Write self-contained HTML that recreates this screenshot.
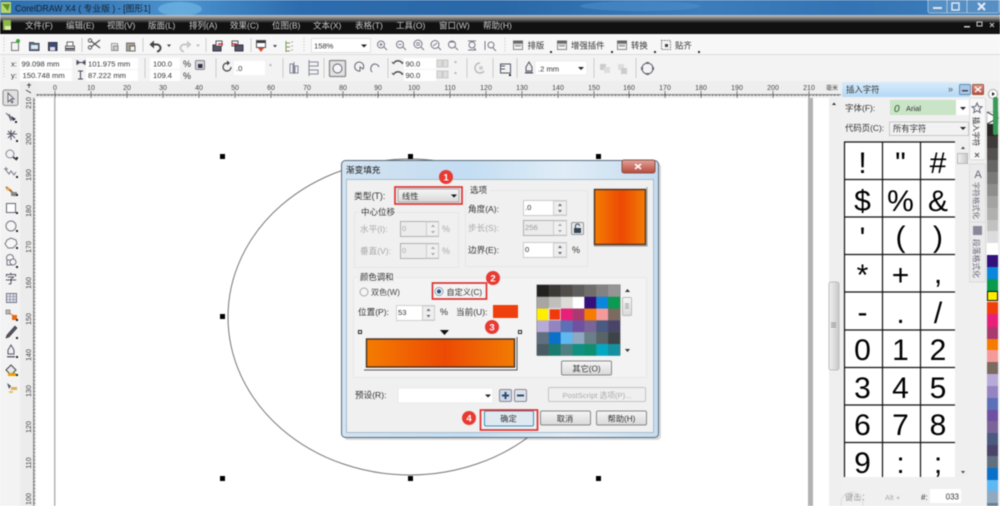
<!DOCTYPE html>
<html><head><meta charset="utf-8"><title>CorelDRAW X4</title>
<style>
html,body{margin:0;padding:0;background:#fff;width:1000px;height:506px;overflow:hidden}
svg{display:block;filter:blur(.4px)}
text{font-family:"Liberation Sans","Noto Sans CJK SC",sans-serif;fill:#333;font-size:8.6px}
.m text{fill:#ccc;font-size:8.5px}
.g text{fill:#a8a8a8}
.r text{font-size:7px;fill:#444}
.p text{font-size:7.6px;fill:#333}
.c text{font-size:30px;fill:#000;text-anchor:middle}
</style></head><body>
<svg width="1000" height="506" viewBox="0 0 1000 506" xmlns="http://www.w3.org/2000/svg">
<defs>
<linearGradient id="tb" x1="0" x2="1" y1="0" y2="0"><stop offset="0" stop-color="#2f6faf"/><stop offset=".1" stop-color="#3a7cba"/><stop offset=".18" stop-color="#4a93cf"/><stop offset=".3" stop-color="#2d6cae"/><stop offset=".5" stop-color="#2a68a8"/><stop offset=".7" stop-color="#3d7dbb"/><stop offset=".85" stop-color="#3574b4"/><stop offset="1" stop-color="#3d7fbc"/></linearGradient>
<linearGradient id="mt" x1="0" x2="0" y1="0" y2="1"><stop offset="0" stop-color="#c8c8c8"/><stop offset=".45" stop-color="#777"/><stop offset="1" stop-color="#111"/></linearGradient>
<linearGradient id="fill" x1="0" x2="1" y1="0" y2="0"><stop offset="0" stop-color="#f47c02"/><stop offset=".53" stop-color="#ec4a04"/><stop offset="1" stop-color="#f27c04"/></linearGradient>
<linearGradient id="dl" x1="0" x2="1" y1="0" y2="0"><stop offset="0" stop-color="#d3e3f1"/><stop offset=".4" stop-color="#c3ddf2"/><stop offset=".7" stop-color="#e0edf7"/><stop offset="1" stop-color="#c6dcef"/></linearGradient>
<linearGradient id="btn" x1="0" x2="0" y1="0" y2="1"><stop offset="0" stop-color="#f6f6f6"/><stop offset="1" stop-color="#d9d9d9"/></linearGradient>
<linearGradient id="pt" x1="0" x2="0" y1="0" y2="1"><stop offset="0" stop-color="#d8ecfb"/><stop offset="1" stop-color="#b4d8f4"/></linearGradient>
<linearGradient id="cl" x1="0" x2="0" y1="0" y2="1"><stop offset="0" stop-color="#dfa49a"/><stop offset="1" stop-color="#b84a3c"/></linearGradient>
<linearGradient id="th" x1="0" x2="1" y1="0" y2="0"><stop offset="0" stop-color="#f2f2f2"/><stop offset="1" stop-color="#c8c8c8"/></linearGradient>
<pattern id="hr" width="3.59" height="6" patternUnits="userSpaceOnUse" x="55" y="92"><rect x="0" y="2" width="1" height="2" fill="#444"/><rect x="1.8" y="2" width="1" height="1.5" fill="#555"/></pattern>
<pattern id="vr" width="6" height="3.6" patternUnits="userSpaceOnUse" x="32" y="103"><rect x="1" y="0" width="2" height="1" fill="#444"/><rect x="1" y="1.8" width="1.5" height="1" fill="#555"/></pattern>
</defs>

<!-- backgrounds -->
<rect width="1000" height="506" fill="#f0f0f0"/>
<rect width="1000" height="15" fill="url(#tb)"/>
<ellipse cx="180" cy="9" rx="22" ry="7" fill="#7cc0ea" opacity=".55"/>
<ellipse cx="640" cy="6" rx="60" ry="5" fill="#4f91cb" opacity=".5"/>
<rect y="15" width="1000" height="8" fill="url(#mt)"/>
<rect y="23" width="1000" height="11" fill="#111"/>
<rect y="34" width="1000" height="20" fill="#f7f7f7"/>
<rect y="54" width="1000" height="1" fill="#ddd"/>
<rect y="55" width="1000" height="26" fill="#f3f3f3"/>
<rect y="81" width="841" height="17" fill="#eee"/>
<rect x="0" y="81" width="20" height="425" fill="#f3f3f3"/>
<rect x="20" y="81" width="16" height="425" fill="#ececec"/>
<rect x="36" y="98" width="793" height="408" fill="#fff"/>

<!-- title -->
<rect x="1" y="2" width="10" height="11" fill="#b7d76a"/><path d="M2 4l6 7 2-7z" fill="#5d8f2a"/>
<text x="15" y="11.500" style="font-size:8.800px;fill:#16222e">CorelDRAW X4 ( 专业版 ) - [图形1]</text>
<rect x="928" y="-2" width="71" height="15" rx="2" fill="#5c93c6" stroke="#a9c8e2" opacity=".85"/>
<line x1="947" y1="0" x2="947" y2="13" stroke="#a9c8e2"/><line x1="967" y1="0" x2="967" y2="13" stroke="#a9c8e2"/>
<rect x="933" y="7" width="9" height="2" fill="#dfe9f2"/>
<rect x="952" y="3" width="7" height="7" fill="none" stroke="#e6edf4" stroke-width="1.400"/>
<path d="M978 3l7 7M985 3l-7 7" stroke="#e6edf4" stroke-width="2"/>

<!-- menu -->
<rect x="3" y="20" width="8" height="10" fill="#8cb84a"/><rect x="5" y="26" width="6" height="4" fill="#dfe9b0"/>
<g class="m">
<text x="25" y="28.500">文件(F)</text><text x="66" y="28.500">编辑(E)</text><text x="107" y="28.500">视图(V)</text><text x="148" y="28.500">版面(L)</text><text x="189" y="28.500">排列(A)</text><text x="230" y="28.500">效果(C)</text><text x="272" y="28.500">位图(B)</text><text x="313" y="28.500">文本(X)</text><text x="355" y="28.500">表格(T)</text><text x="396" y="28.500">工具(O)</text><text x="439" y="28.500">窗口(W)</text><text x="483" y="28.500">帮助(H)</text>
</g>
<rect x="964" y="26" width="6" height="1.500" fill="#ccc"/><rect x="977" y="22" width="5" height="4" fill="none" stroke="#ccc"/><path d="M990 23l4 4M994 23l-4 4" stroke="#ccc"/>

<!-- standard toolbar -->
<g>
<line x1="4" y1="38" x2="4" y2="52" stroke="#bbb" stroke-dasharray="1 2"/>
<path d="M11.500 42.500h7v8h-7z" fill="#f4f4f4" stroke="#777"/><circle cx="18" cy="41" r="2" fill="#3aa83a"/>
<path d="M29.500 42.500h4l1 1h4.500v7h-9.500z" fill="#5c7690" stroke="#445"/><rect x="31" y="45" width="7" height="4" fill="#dfe6ee"/>
<rect x="48.500" y="42.500" width="8.500" height="8" fill="#3e4c74" stroke="#334"/><rect x="50" y="47" width="5" height="3.500" fill="#dde"/>
<path d="M65.500 46h9v4.500h-9z" fill="#ddd" stroke="#666"/><rect x="67" y="42" width="6" height="4" fill="#fff" stroke="#666"/><rect x="66" y="48" width="8" height="1.500" fill="#445"/>
<line x1="82" y1="38" x2="82" y2="52" stroke="#ccc"/>
<path d="M91 41l9 7M91 47l9-7" stroke="#555" stroke-width="1.200" fill="none"/><circle cx="90" cy="40.500" r="1.700" fill="none" stroke="#555"/><circle cx="90" cy="47.500" r="1.700" fill="none" stroke="#555"/>
<rect x="111.500" y="43.500" width="6" height="7" fill="#eee" stroke="#999"/><rect x="113.500" y="46" width="4.500" height="4.500" fill="#ccc" stroke="#888"/>
<rect x="126.500" y="43" width="8" height="8" fill="#a89f8c" stroke="#777"/><rect x="130" y="46" width="5" height="5" fill="#eee" stroke="#666"/>
<line x1="143" y1="38" x2="143" y2="52" stroke="#ccc"/>
<path d="M151 44.500h6a3.500 3.500 0 0 1 0 7" fill="none" stroke="#444" stroke-width="2"/><path d="M154 40.500l-4.500 4 4.500 4z" fill="#444"/>
<path d="M167 44.500l4 0-2 2.500z" fill="#444"/>
<path d="M190 44.500h-6a3.500 3.500 0 0 0 0 7" fill="none" stroke="#c8c8c8" stroke-width="2"/><path d="M187 40.500l4.500 4-4.500 4z" fill="#c8c8c8"/>
<path d="M196 44.500l4 0-2 2.500z" fill="#bbb"/>
<line x1="206" y1="38" x2="206" y2="52" stroke="#ccc"/>
<rect x="213" y="45" width="8" height="6" fill="#556" stroke="#334"/><rect x="216" y="41" width="6" height="5" fill="#fff" stroke="#555"/><path d="M218 44h5" stroke="#c33" stroke-width="1.500"/>
<rect x="232" y="41" width="6" height="5" fill="#fff" stroke="#555"/><rect x="235" y="45" width="8" height="6" fill="#556" stroke="#334"/><path d="M232 44h5" stroke="#c33" stroke-width="1.500"/>
<line x1="251" y1="38" x2="251" y2="52" stroke="#ccc"/>
<rect x="256.500" y="40.500" width="9" height="7" fill="#fff" stroke="#555"/><rect x="257" y="41" width="8" height="2" fill="#334"/><path d="M258 48h6l-3 4z" fill="#d84c2c"/>
<path d="M273 45l4 0-2 2.500z" fill="#444"/>
<path d="M286 41v11M286 43h4M286 47h4M286 51h4" stroke="#7a9a5a" fill="none"/><path d="M291 42h2M291 46h2M291 50h2" stroke="#aaa"/>
<line x1="304" y1="38" x2="304" y2="52" stroke="#bbb" stroke-dasharray="1 2"/>
<rect x="311.500" y="38.500" width="59" height="14" fill="#fff" stroke="#e2e2e2"/>
<text x="314" y="48.500" style="font-size:7.600px">158%</text><path d="M361 44.500h6l-3 3z" fill="#222"/>
</g>
<!-- zoom icons -->
<g fill="none" stroke="#778" stroke-width="1">
<circle cx="381" cy="44.500" r="3.500"/><path d="M384 47l3 3M379.500 44.500h3M381 43v3"/>
<circle cx="400" cy="44.500" r="3.500"/><path d="M403 47l3 3M398.500 44.500h3"/>
<circle cx="418" cy="44" r="4"/><path d="M421 47l3 3M416 43h4M416 45h4"/>
<circle cx="435" cy="44.500" r="4"/><path d="M438 47l3 3M433 46l4-3"/>
<circle cx="452" cy="44.500" r="3.500"/><path d="M455 47l3 3M450 42h4"/>
<path d="M468 41h8M468 50h8"/><circle cx="472" cy="45" r="3"/><path d="M474 48l2 2"/>
<path d="M485 41v9"/><circle cx="491" cy="45" r="3"/><path d="M493 48l3 3"/>
</g>
<g>
<line x1="505" y1="38" x2="505" y2="52" stroke="#bbb" stroke-dasharray="1 2"/>
<rect x="513" y="40.500" width="10" height="3" fill="#666"/><rect x="513.500" y="43.500" width="9" height="6" fill="#f4f4f4" stroke="#888"/><rect x="515" y="45" width="6" height="1.500" fill="#999"/>
<text x="527.500" y="48.500" style="font-size:8.400px">排版</text><rect x="550" y="51" width="2" height="2" fill="#333"/>
<rect x="557" y="40.500" width="10" height="3" fill="#666"/><rect x="557.500" y="43.500" width="9" height="6" fill="#f4f4f4" stroke="#888"/><rect x="559" y="45" width="6" height="1.500" fill="#999"/>
<text x="571" y="48.500" style="font-size:8.400px">增强插件</text><rect x="611" y="51" width="2" height="2" fill="#333"/>
<rect x="617" y="40.500" width="10" height="3" fill="#666"/><rect x="617.500" y="43.500" width="9" height="6" fill="#f4f4f4" stroke="#888"/><rect x="619" y="45" width="6" height="1.500" fill="#999"/>
<text x="631" y="48.500" style="font-size:8.400px">转换</text><rect x="654" y="51" width="2" height="2" fill="#333"/>
<rect x="661.500" y="40.500" width="9" height="9" fill="#f6f6f6" stroke="#777" stroke-dasharray="1.500 1"/><rect x="665" y="44" width="3" height="3" fill="#444"/>
<text x="675" y="48.500" style="font-size:8.400px">贴齐</text><rect x="698" y="51" width="2" height="2" fill="#333"/>
</g>

<!-- property bar -->
<g class="p">
<line x1="4" y1="58" x2="4" y2="78" stroke="#bbb" stroke-dasharray="1 2"/>
<rect x="20" y="58" width="52" height="11" fill="#fff"/><rect x="20" y="70" width="52" height="11" fill="#fff"/>
<rect x="86" y="58" width="52" height="11" fill="#fff"/><rect x="86" y="70" width="52" height="11" fill="#fff"/>
<text x="11" y="66.500">x: </text><text x="21.500" y="66.500">99.098 mm</text>
<text x="11" y="78">y: </text><text x="22.500" y="78">150.748 mm</text>
<path d="M77 62.500h8M77 60v5M85 60v5" stroke="#445" fill="none"/><path d="M79 61l-2 1.500 2 1.500M83 61l2 1.500-2 1.500" stroke="#445" fill="none"/>
<path d="M80.500 71v8M78 71h5M78 79h5" stroke="#445" fill="none"/>
<text x="88" y="66.500">101.975 mm</text><text x="88" y="78">87.222 mm</text>
<line x1="145" y1="58" x2="145" y2="78" stroke="#ccc"/>
<rect x="150" y="58" width="30" height="11" fill="#fff"/><rect x="150" y="70" width="30" height="11" fill="#fff"/>
<text x="153" y="66.500">100.0</text><text x="153" y="78">109.4</text>
<text x="183" y="67" style="font-size:9px">%</text><text x="183" y="79" style="font-size:9px">%</text>
<rect x="195.500" y="60.500" width="9" height="9" rx="1" fill="#d5d5dd" stroke="#888"/><rect x="198" y="64" width="4.500" height="4" fill="#334"/>
<line x1="216" y1="58" x2="216" y2="78" stroke="#ccc"/>
<path d="M231 67a4 4 0 1 1-4-4h2" fill="none" stroke="#444" stroke-width="1.200"/><path d="M227 60.500l3 2.500-3 2.500z" fill="#444"/>
<rect x="234" y="61" width="31" height="14" fill="#fff"/><text x="236" y="71">.0</text>
<text x="269" y="69" style="fill:#777">°</text>
<line x1="283" y1="58" x2="283" y2="78" stroke="#ccc"/>
<path d="M290 64h3v9h-3zM295 66h3v7h-3zM294 62v12" fill="none" stroke="#889"/>
<path d="M309 62h9v4h-9zM309 70h9v4h-9zM309 60v16" fill="none" stroke="#889"/>
<line x1="324" y1="58" x2="324" y2="78" stroke="#ccc"/>
<rect x="329.500" y="60.500" width="16" height="16" rx="1" fill="#e2e2e2" stroke="#888" stroke-width="1.300"/><circle cx="337.500" cy="68.500" r="4.500" fill="#f5f5f5" stroke="#667"/>
<path d="M360 71a4.500 4.500 0 1 1 3-2l-3-2z" fill="none" stroke="#667"/>
<path d="M372 72a5 5 0 0 1 2-8 5 5 0 0 1 5 3" fill="none" stroke="#667"/>
<line x1="388" y1="58" x2="388" y2="78" stroke="#ccc"/>
<path d="M394 63a4.500 4 0 0 1 8 0" fill="none" stroke="#444" stroke-width="1.300"/><path d="M394 64l-2-2M402 64l1-2" stroke="#444"/>
<path d="M394 74a4.500 4 0 0 1 8 0" fill="none" stroke="#444" stroke-width="1.300"/><path d="M394 75l-2-2M402 75l1-2" stroke="#444"/>
<rect x="404" y="58" width="32" height="11" fill="#fff"/><rect x="404" y="70" width="32" height="11" fill="#fff"/>
<text x="405.500" y="66.500">90.0</text><text x="405.500" y="78">90.0</text>
<rect x="437" y="60" width="5" height="7" fill="#ddd" stroke="#aaa" stroke-width=".5"/><rect x="443" y="60" width="5" height="7" fill="#ddd" stroke="#aaa" stroke-width=".5"/>
<rect x="437" y="71" width="5" height="7" fill="#ddd" stroke="#aaa" stroke-width=".5"/><rect x="443" y="71" width="5" height="7" fill="#ddd" stroke="#aaa" stroke-width=".5"/>
<text x="454" y="66" style="fill:#777">°</text><text x="454" y="77" style="fill:#777">°</text>
<line x1="467" y1="58" x2="467" y2="78" stroke="#ccc"/>
<path d="M480 63a5 5 0 1 0 4 8" fill="none" stroke="#bbb" stroke-width="1.500"/><circle cx="481" cy="68" r="2" fill="#ccc"/>
<line x1="493" y1="58" x2="493" y2="78" stroke="#ccc"/>
<rect x="500.500" y="64" width="10" height="9" fill="none" stroke="#556"/><path d="M500 66h5M500 69h5" stroke="#556"/><rect x="509" y="74" width="2" height="2" fill="#222"/>
<line x1="517" y1="58" x2="517" y2="78" stroke="#ccc"/>
<path d="M529 62l3 5v4h-6v-4z" fill="#eee" stroke="#556"/><rect x="525" y="72" width="8" height="1.500" fill="#556"/>
<rect x="535" y="61" width="52" height="14" fill="#fff" stroke="#eee"/>
<text x="538" y="71.500">.2 mm</text><path d="M578 67h6l-3 3z" fill="#222"/>
<line x1="594" y1="58" x2="594" y2="78" stroke="#ccc"/>
<rect x="600" y="64" width="6" height="6" fill="#ccc"/><rect x="604" y="67" width="6" height="6" fill="#ddd"/>
<rect x="618" y="64" width="6" height="6" fill="#ddd"/><rect x="621" y="68" width="6" height="6" fill="#ccc"/>
<line x1="636" y1="58" x2="636" y2="78" stroke="#ccc"/>
<circle cx="647.500" cy="68.500" r="5.500" fill="none" stroke="#667"/>
<rect x="646" y="62" width="3" height="2" fill="#667"/><rect x="646" y="73" width="3" height="2" fill="#667"/><rect x="641" y="67" width="2" height="3" fill="#667"/><rect x="652" y="67" width="2" height="3" fill="#667"/>
</g>

<!-- horizontal ruler -->
<rect x="36" y="92" width="805" height="6" fill="url(#hr)"/>
<g class="r" text-anchor="middle">
<text x="55" y="90">0</text><text x="91" y="90">10</text><text x="127" y="90">20</text><text x="163" y="90">30</text><text x="199" y="90">40</text><text x="235" y="90">50</text><text x="271" y="90">60</text><text x="307" y="90">70</text><text x="343" y="90">80</text><text x="378" y="90">90</text><text x="414" y="90">100</text><text x="450" y="90">110</text><text x="486" y="90">120</text><text x="522" y="90">130</text><text x="558" y="90">140</text><text x="594" y="90">150</text><text x="629" y="90">160</text><text x="665" y="90">170</text><text x="701" y="90">180</text><text x="737" y="90">190</text><text x="773" y="90">200</text><text x="809" y="90">210</text>
<text x="832" y="90" style="font-size:6px">毫米</text>
</g>
<g stroke="#555"><path d="M55 91v7M91 91v7M127 91v7M163 91v7M199 91v7M235 91v7M271 91v7M307 91v7M343 91v7M378 91v7M414 91v7M450 91v7M486 91v7M522 91v7M558 91v7M594 91v7M629 91v7M665 91v7M701 91v7M737 91v7M773 91v7M809 91v7" stroke-width=".7"/></g>
<path d="M27 85h4M29 83v5M26 90l5 3" stroke="#444" fill="none" stroke-width=".9"/>

<!-- vertical ruler -->
<rect x="32" y="98" width="4" height="408" fill="url(#vr)"/>
<g class="r" text-anchor="middle">
<text transform="translate(31,103) rotate(-90)">210</text><text transform="translate(31,139) rotate(-90)">200</text><text transform="translate(31,175) rotate(-90)">190</text><text transform="translate(31,211) rotate(-90)">180</text><text transform="translate(31,247) rotate(-90)">170</text><text transform="translate(31,283) rotate(-90)">160</text><text transform="translate(31,319) rotate(-90)">150</text><text transform="translate(31,355) rotate(-90)">140</text><text transform="translate(31,391) rotate(-90)">130</text><text transform="translate(31,427) rotate(-90)">120</text><text transform="translate(31,463) rotate(-90)">110</text><text transform="translate(31,499) rotate(-90)">100</text>
</g>

<!-- toolbox -->
<g>
<rect x="3" y="90" width="15" height="15.500" rx="2" fill="#e0e0e0" stroke="#8d8d8d"/>
<path d="M8 93l0 9 2-2 2 3 1-1-2-3h3z" fill="#eee" stroke="#667"/>
<path d="M6 113l3 3 2 5M9 114l3 6" fill="none" stroke="#667"/><path d="M11 116l5 3-3 2z" fill="#334"/>
<path d="M7 134h10M11 130v10M8 131l7 7M15 131l-7 7" stroke="#556" fill="none"/>
<circle cx="10" cy="154" r="4" fill="#f2f2f2" stroke="#889"/><path d="M13 157l4 3" stroke="#333" stroke-width="1.600"/>
<path d="M6 170l3 4 2-3 3 4 2-3" fill="none" stroke="#778"/><path d="M6 167v4M4 169h4" stroke="#778"/>
<path d="M6 187l5 4 4 5" stroke="#a56a2a" stroke-width="2" fill="none"/><rect x="11" y="192" width="6" height="4" fill="#888"/><circle cx="8" cy="189" r="1.500" fill="#e8a23a"/>
<rect x="6.500" y="203.500" width="9" height="9" fill="#fff" stroke="#667"/>
<circle cx="11" cy="226" r="5" fill="#f6f6f6" stroke="#778"/>
<path d="M7 240l4-2 5 2 1 4-4 4h-5l-3-4z" fill="#f6f6f6" stroke="#778"/>
<circle cx="10" cy="258" r="3.500" fill="#f6f6f6" stroke="#778"/><rect x="7" y="260" width="5" height="5" fill="#eee" stroke="#778"/><circle cx="13" cy="262" r="3" fill="#f6f6f6" stroke="#778"/>
<text x="5" y="283" style="font-size:12px;fill:#445">字</text>
<rect x="6.500" y="293.500" width="10" height="9" fill="#dfe4ee" stroke="#778"/><path d="M6 296.500h10M6 299.500h10M10 293v9M13.500 293v9" stroke="#778" stroke-width=".6"/>
<rect x="6" y="310" width="4" height="4" fill="#bbb" stroke="#666" stroke-width=".6"/><path d="M9 313l5 3" stroke="#c66"/><rect x="12" y="315" width="5" height="5" fill="#e86a10"/>
<path d="M15 326l-8 9-1 3 3-1 8-9z" fill="#556" stroke="#333" stroke-width=".6"/>
<path d="M11 345l3 5v4h-6v-4z" fill="#eee" stroke="#556"/><rect x="7" y="356" width="8" height="1.500" fill="#667"/>
<path d="M6 370l5-5 5 5-5 5z" fill="#e8e8e8" stroke="#445"/><rect x="8" y="373" width="8" height="3" fill="#e8a200"/>
<path d="M7 383l4 3-2 3z" fill="#556"/><rect x="11" y="387" width="6" height="3" fill="#d9b25a"/><rect x="9" y="391" width="4" height="2" fill="#e6c070"/>
<g fill="#222"><rect x="15" y="121" width="2" height="2"/><rect x="16" y="140" width="2" height="2"/><rect x="16" y="157" width="2" height="2"/><rect x="16" y="176" width="2" height="2"/><rect x="16" y="194" width="2" height="2"/><rect x="16" y="212" width="2" height="2"/><rect x="16" y="230" width="2" height="2"/><rect x="16" y="247" width="2" height="2"/><rect x="16" y="266" width="2" height="2"/><rect x="16" y="319" width="2" height="2"/><rect x="16" y="337" width="2" height="2"/><rect x="16" y="356" width="2" height="2"/><rect x="16" y="374" width="2" height="2"/></g>
</g>

<!-- canvas -->
<rect x="54" y="98" width="1.500" height="408" fill="#b4b4b4"/>
<rect x="808" y="98" width="5" height="408" fill="#b2b2b2"/>
<ellipse cx="410" cy="317" rx="182" ry="158" fill="#fff" stroke="#777" stroke-width="1"/>
<g fill="#000"><rect x="220" y="154" width="5" height="5"/><rect x="408" y="154" width="5" height="5"/><rect x="596" y="154" width="5" height="5"/><rect x="220" y="314" width="5" height="5"/><rect x="220" y="476" width="5" height="5"/><rect x="408" y="476" width="5" height="5"/><rect x="596" y="476" width="5" height="5"/></g>

<!-- main v scrollbar -->
<rect x="829" y="98" width="12" height="408" fill="#efefef"/>
<path d="M832 105l2-2.500 2 2.500z" fill="#333"/>
<rect x="829" y="282" width="10" height="88" rx="2" fill="url(#th)" stroke="#bdbdbd"/>
<path d="M831 323h5M831 325h5M831 327h5" stroke="#777" stroke-width=".7"/>

<!-- docker -->
<rect x="841" y="81" width="159" height="425" fill="#f0f0f0"/>
<rect x="842" y="82" width="128" height="15" fill="url(#pt)"/>
<text x="846" y="92.500" style="font-size:8.400px">插入字符</text>
<text x="948" y="92" style="font-size:9px;fill:#555">»</text>
<rect x="959.500" y="84.500" width="11" height="10" rx="1" fill="#a9c8e6" stroke="#668cb0"/><rect x="962" y="90" width="6" height="1.500" fill="#445"/>
<rect x="972.500" y="84.500" width="11" height="10" rx="1" fill="url(#cl)" stroke="#985040"/><path d="M975 87l6 5M981 87l-6 5" stroke="#fff" stroke-width="1.400"/>
<text x="845" y="111" style="font-size:8.500px">字体(F):</text>
<rect x="956" y="100" width="13" height="15" fill="#fff"/>
<rect x="890" y="100" width="66" height="15" fill="#c9e4c6"/>
<text x="894" y="112" style="font-size:10px;fill:#2a5a2a;font-style:italic">0</text><text x="906" y="111" style="font-size:7.500px">Arial</text>
<path d="M960 107h6l-3 3z" fill="#222"/>
<text x="845" y="131" style="font-size:8.400px">代码页(C):</text>
<rect x="889.500" y="122" width="79" height="13.500" fill="#f2f2f2" stroke="#c8c8c8"/>
<text x="893" y="131.500" style="font-size:8.300px">所有字符</text><path d="M960 127h6l-3 3z" fill="#222"/>

<!-- tabs -->
<rect x="969.500" y="98" width="16" height="62" rx="2" fill="#f7f7f7" stroke="#ddd"/>
<path d="M977 103l1.500 3.500 3.500.3-2.700 2.300.9 3.500-3.200-1.900-3.200 1.900.9-3.500-2.700-2.300 3.500-.3z" fill="none" stroke="#667"/>
<text transform="translate(973.500,117) rotate(90)" style="font-size:7.300px;fill:#222">插入字符</text>
<path d="M975 153l4 4M979 153l-4 4" stroke="#555"/>
<rect x="969.500" y="164" width="16" height="58" fill="#ebebeb" stroke="#dcdcdc"/>
<text x="978" y="178" text-anchor="middle" style="font-size:11px;fill:#667">A</text>
<text transform="translate(973.500,182) rotate(90)" style="font-size:7.400px;fill:#667">字符格式化</text>
<rect x="969.500" y="222" width="16" height="60" fill="#ebebeb" stroke="#dcdcdc"/>
<rect x="973" y="226" width="9" height="9" fill="#889"/>
<text transform="translate(973.500,239) rotate(90)" style="font-size:7.800px;fill:#667">段落格式化</text>

<!-- char grid -->
<rect x="845" y="142" width="110" height="335" fill="#fff"/>
<g stroke="#111" stroke-width="1.200" fill="none">
<path d="M844.500 142v335M882.500 142v335M920.500 142v335"/>
<path d="M844 142h111M844 179.500h111M844 217h111M844 254.500h111M844 292h111M844 330h111M844 367.500h111M844 405h111M844 442.500h111"/>
</g>
<g class="c">
<text x="862.500" y="173">!</text><text x="900.500" y="173">"</text><text x="938" y="173">#</text>
<text x="862.500" y="211">$</text><text x="900.500" y="211">%</text><text x="938" y="211">&amp;</text>
<text x="862.500" y="248">'</text><text x="900.500" y="247">(</text><text x="938" y="247">)</text>
<text x="862.500" y="285">*</text><text x="900.500" y="285">+</text><text x="938" y="283">,</text>
<text x="862.500" y="322">-</text><text x="900.500" y="323">.</text><text x="938" y="323">/</text>
<text x="862.500" y="360">0</text><text x="900.500" y="360">1</text><text x="938" y="360">2</text>
<text x="862.500" y="398">3</text><text x="900.500" y="398">4</text><text x="938" y="398">5</text>
<text x="862.500" y="435">6</text><text x="900.500" y="435">7</text><text x="938" y="435">8</text>
<text x="862.500" y="473">9</text><text x="900.500" y="473">:</text><text x="938" y="473">;</text>
</g>
<rect x="845" y="477" width="125" height="29" fill="#f0f0f0"/>
<rect x="955" y="142" width="14" height="335" fill="#efefef"/>
<path d="M961 149l2-2.500 2 2.500z" fill="#444"/><rect x="957.500" y="153.500" width="10" height="10" fill="url(#th)" stroke="#b8b8b8"/>
<path d="M961 471l2 2.500 2-2.500z" fill="#444"/>
<text x="845" y="500" style="fill:#999;font-size:8.200px">键击：</text>
<circle cx="852" cy="503" r="11" fill="none" stroke="#ddd"/>
<text x="885" y="500" style="fill:#aaa;font-size:7.500px">Alt +</text>
<text x="921" y="500" style="font-size:8px">#:</text>
<rect x="930" y="489" width="31" height="14" fill="#fff"/>
<text x="959" y="499.500" text-anchor="end" style="font-size:8px">033</text>

<!-- palette -->
<g>
<rect x="986" y="97" width="14" height="409" fill="#eee"/>
<circle cx="993" cy="94" r="4.500" fill="#fff" stroke="#aaa"/><path d="M992 92l3 2-3 2z" fill="#222"/>
<path d="M987 112h11v12h-11z" fill="#fff" stroke="#999" stroke-width=".5"/><path d="M987 112l11 6-11 6" fill="none" stroke="#444"/>
<rect x="987" y="124" width="11" height="12" fill="#2a2522"/><rect x="987" y="136" width="11" height="12" fill="#3f3b38"/><rect x="987" y="148" width="11" height="12" fill="#54504e"/><rect x="987" y="160" width="11" height="12" fill="#666664"/><rect x="987" y="172" width="11" height="12" fill="#7a7a78"/><rect x="987" y="184" width="11" height="12" fill="#8e8e8c"/><rect x="987" y="196" width="11" height="12" fill="#a3a3a1"/><rect x="987" y="208" width="11" height="12" fill="#b0b0ae"/><rect x="987" y="220" width="11" height="11" fill="#c2c2c0"/><rect x="987" y="231" width="11" height="12" fill="#dcdcdc"/><rect x="987" y="243" width="11" height="12" fill="#fff"/><rect x="987" y="255" width="11" height="12" fill="#33107a"/><rect x="987" y="267" width="11" height="12" fill="#0a86dd"/><rect x="987" y="279" width="11" height="12" fill="#0a9a4e"/>
<rect x="987.500" y="291.500" width="10" height="9" fill="#ffee00" stroke="#111"/>
<rect x="987" y="302" width="11" height="12" fill="#ef3f0c"/><rect x="987" y="314" width="11" height="13" fill="#e8207a"/><rect x="987" y="327" width="11" height="12" fill="#a83a70"/><rect x="987" y="339" width="11" height="11" fill="#f57c00"/><rect x="987" y="350" width="11" height="12" fill="#f59a9a"/><rect x="987" y="362" width="11" height="12" fill="#7a6a60"/><rect x="987" y="374" width="11" height="12" fill="#b8aad8"/><rect x="987" y="386" width="11" height="12" fill="#9484c0"/><rect x="987" y="398" width="11" height="12" fill="#5c70b8"/><rect x="987" y="410" width="11" height="11" fill="#7050a0"/><rect x="987" y="421" width="11" height="12" fill="#7a6498"/><rect x="987" y="433" width="11" height="12" fill="#4a5a80"/><rect x="987" y="445" width="11" height="11" fill="#4a4468"/><rect x="987" y="456" width="11" height="12" fill="#607080"/><rect x="987" y="468" width="11" height="12" fill="#0a70c8"/><rect x="987" y="480" width="11" height="11" fill="#60b8f0"/><rect x="987" y="491" width="11" height="12" fill="#90a8c0"/><rect x="987" y="503" width="11" height="3" fill="#6a8090"/>
<rect x="993" y="97" width="5" height="38" rx="2" fill="#3a9a58"/>
</g>

<!-- dialog -->
<rect x="344" y="163" width="317" height="277" rx="4" fill="#000" opacity=".15"/>
<rect x="341.500" y="160.500" width="317" height="277" rx="4" fill="url(#dl)" stroke="#5b6b7a"/>
<rect x="346.500" y="179.500" width="307" height="253" fill="#f0f0f0" stroke="#a8bccc"/>
<text x="346" y="173" style="font-size:8.600px;fill:#111">渐变填充</text>
<rect x="622" y="160" width="33" height="13" rx="2" fill="url(#cl)" stroke="#8a5048"/>
<path d="M635 164l6 5M641 164l-6 5" stroke="#fff" stroke-width="1.600"/>

<text x="354" y="199" style="font-size:8.800px">类型(T):</text>
<rect x="398" y="189" width="61" height="13" fill="url(#btn)" stroke="#aaa"/>
<text x="402" y="199" style="font-size:8.200px">线性</text><path d="M451 194.500h6l-3 3z" fill="#111"/>
<rect x="395" y="187" width="67" height="17" fill="none" stroke="#dc2a2a" stroke-width="1.600"/>

<rect x="465.500" y="190.500" width="122" height="76" fill="none" stroke="#e6e6e6"/>
<rect x="468" y="184" width="22" height="12" fill="#f0f0f0"/>
<text x="470" y="193" style="font-size:8.500px">选项</text>

<rect x="354.500" y="212.500" width="104" height="55" fill="none" stroke="#e6e6e6"/>
<rect x="359" y="206" width="38" height="12" fill="#f0f0f0"/>
<text x="361" y="215" style="font-size:8.500px">中心位移</text>
<g class="g">
<text x="360" y="232">水平(I):</text><text x="360" y="254">垂直(V):</text>
<text x="442" y="232" style="font-size:9px">%</text><text x="442" y="254" style="font-size:9px">%</text>
<text x="468" y="231">步长(S):</text>
</g>
<rect x="400.500" y="221.500" width="38" height="15" fill="#ececec" stroke="#b0b0b0"/><text x="402" y="231" style="fill:#aaa;font-size:7.600px">0</text>
<rect x="426.500" y="222" width="12" height="14" fill="#f0f0f0" stroke="#ccc"/><path d="M431 227l2-2.500 2 2.500zM431 231l2 2.500 2-2.500z" fill="#aaa"/>
<rect x="400.500" y="243.500" width="38" height="15" fill="#ececec" stroke="#b0b0b0"/><text x="402" y="253" style="fill:#aaa;font-size:7.600px">0</text>
<rect x="426.500" y="244" width="12" height="14" fill="#f0f0f0" stroke="#ccc"/><path d="M431 249l2-2.500 2 2.500zM431 253l2 2.500 2-2.500z" fill="#aaa"/>

<text x="468" y="212">角度(A):</text>
<rect x="523.500" y="200.500" width="43" height="15" fill="#fff" stroke="#ccc"/><text x="525" y="210" style="font-size:7.600px">.0</text>
<rect x="553.500" y="201" width="13" height="14" fill="#eee" stroke="#ccc"/><path d="M558 206l2-2.500 2 2.500zM558 210l2 2.500 2-2.500z" fill="#667"/>
<rect x="523.500" y="220.500" width="43" height="15" fill="#ececec" stroke="#b0b0b0"/><text x="525" y="230" style="fill:#999;font-size:7.600px">256</text>
<rect x="553.500" y="221" width="13" height="14" fill="#f0f0f0" stroke="#ccc"/><path d="M558 226l2-2.500 2 2.500zM558 230l2 2.500 2-2.500z" fill="#aaa"/>
<rect x="571.500" y="222.500" width="12" height="12" rx="1" fill="#e6e6e6" stroke="#999"/><rect x="574" y="228" width="7" height="5" fill="#345"/><path d="M575.500 228v-2a2 2 0 0 1 4 0" fill="none" stroke="#345"/>
<text x="468" y="253">边界(E):</text>
<rect x="523.500" y="242.500" width="43" height="15" fill="#fff" stroke="#ccc"/><text x="525" y="252" style="font-size:7.600px">0</text>
<rect x="553.500" y="243" width="13" height="14" fill="#eee" stroke="#ccc"/><path d="M558 248l2-2.500 2 2.500zM558 252l2 2.500 2-2.500z" fill="#667"/>
<text x="572" y="253" style="font-size:9px">%</text>

<!-- preview -->
<rect x="594.500" y="189.500" width="51" height="55" fill="url(#fill)" stroke="#4a3020" stroke-width="1.400"/>
<path d="M647 187v59h-53" fill="none" stroke="#9a9a9a"/>

<!-- color blend group -->
<rect x="353.500" y="277.500" width="293" height="100" rx="1" fill="#f3f3f3" stroke="#e8e8e8"/>
<rect x="358" y="271" width="37" height="12" fill="#f0f0f0"/>
<text x="360" y="280" style="font-size:8.400px">颜色调和</text>
<circle cx="364" cy="292" r="4" fill="#f4f4f4" stroke="#aaa"/>
<text x="371" y="295" style="fill:#444;font-size:8px">双色(W)</text>
<circle cx="439" cy="291.500" r="4" fill="#fff" stroke="#8a9db0"/><circle cx="439" cy="291.500" r="2.200" fill="#33587e"/>
<text x="446.500" y="295" style="font-size:8.100px">自定义(C)</text>
<rect x="432.500" y="283" width="54" height="16" fill="none" stroke="#dc2a2a" stroke-width="1.600"/>

<text x="358" y="315">位置(P):</text>
<rect x="396.500" y="305.500" width="38" height="15" fill="#fff" stroke="#d0d0d0"/><text x="398" y="315" style="font-size:7.600px">53</text>
<rect x="422.500" y="306" width="12" height="14" fill="#eee" stroke="#ccc"/><path d="M426.500 311l2-2.500 2 2.500zM426.500 315l2 2.500 2-2.500z" fill="#667"/>
<text x="440" y="315" style="font-size:9px">%</text>
<text x="456" y="315">当前(U):</text>
<rect x="493" y="305" width="25" height="13" fill="#ef3f0c"/>

<rect x="358.500" y="330.500" width="3" height="3" fill="#fff" stroke="#222"/>
<rect x="518.500" y="330.500" width="3" height="3" fill="#fff" stroke="#222"/>
<path d="M440 330h9l-4.500 5z" fill="#111"/>
<rect x="366.500" y="339" width="148" height="28" fill="url(#fill)" stroke="#4a3020" stroke-width="1.400"/>
<path d="M517 337v33h-153" fill="none" stroke="#555"/>

<!-- palette in dialog -->
<rect x="536.500" y="284.500" width="84" height="71" fill="#777"/>
<g>
<rect x="537" y="285" width="11.900" height="11.800" fill="#232020"/><rect x="548.900" y="285" width="11.800" height="11.800" fill="#3b3836"/><rect x="560.700" y="285" width="11.900" height="11.800" fill="#4f4c4a"/><rect x="572.600" y="285" width="11.800" height="11.800" fill="#5f5d5c"/><rect x="584.400" y="285" width="11.900" height="11.800" fill="#6f6e6d"/><rect x="596.300" y="285" width="11.800" height="11.800" fill="#828282"/><rect x="608.100" y="285" width="11.900" height="11.800" fill="#959595"/>
<rect x="537" y="296.800" width="11.900" height="11.800" fill="#a8a6a3"/><rect x="548.900" y="296.800" width="11.800" height="11.800" fill="#c0bfbb"/><rect x="560.700" y="296.800" width="11.900" height="11.800" fill="#dcdbd8"/><rect x="572.600" y="296.800" width="11.800" height="11.800" fill="#fff"/><rect x="584.400" y="296.800" width="11.900" height="11.800" fill="#33107a"/><rect x="596.300" y="296.800" width="11.800" height="11.800" fill="#0a86dd"/><rect x="608.100" y="296.800" width="11.900" height="11.800" fill="#0a9a50"/>
<rect x="537" y="308.600" width="11.900" height="11.800" fill="#ffee00"/><rect x="548.900" y="308.600" width="11.800" height="11.800" fill="#ef3a0c" stroke="#ddd" stroke-width="1.500"/><rect x="560.700" y="308.600" width="11.900" height="11.800" fill="#e8207a"/><rect x="572.600" y="308.600" width="11.800" height="11.800" fill="#a83a70"/><rect x="584.400" y="308.600" width="11.900" height="11.800" fill="#f57c00"/><rect x="596.300" y="308.600" width="11.800" height="11.800" fill="#f59a9a"/><rect x="608.100" y="308.600" width="11.900" height="11.800" fill="#7a6a60"/>
<rect x="537" y="320.400" width="11.900" height="11.800" fill="#b8aad8"/><rect x="548.900" y="320.400" width="11.800" height="11.800" fill="#9484c0"/><rect x="560.700" y="320.400" width="11.900" height="11.800" fill="#5c70b8"/><rect x="572.600" y="320.400" width="11.800" height="11.800" fill="#7050a0"/><rect x="584.400" y="320.400" width="11.900" height="11.800" fill="#7a6498"/><rect x="596.300" y="320.400" width="11.800" height="11.800" fill="#4a5a80"/><rect x="608.100" y="320.400" width="11.900" height="11.800" fill="#4a4468"/>
<rect x="537" y="332.200" width="11.900" height="11.800" fill="#607080"/><rect x="548.900" y="332.200" width="11.800" height="11.800" fill="#0a70c8"/><rect x="560.700" y="332.200" width="11.900" height="11.800" fill="#60b8f0"/><rect x="572.600" y="332.200" width="11.800" height="11.800" fill="#90a8c0"/><rect x="584.400" y="332.200" width="11.900" height="11.800" fill="#6a8088"/><rect x="596.300" y="332.200" width="11.800" height="11.800" fill="#586468"/><rect x="608.100" y="332.200" width="11.900" height="11.800" fill="#3c4448"/>
<rect x="537" y="344" width="11.900" height="11.800" fill="#4a5c62"/><rect x="548.900" y="344" width="11.800" height="11.800" fill="#1a7a70"/><rect x="560.700" y="344" width="11.900" height="11.800" fill="#4f8080"/><rect x="572.600" y="344" width="11.800" height="11.800" fill="#109080"/><rect x="584.400" y="344" width="11.900" height="11.800" fill="#0f8f70"/><rect x="596.300" y="344" width="11.800" height="11.800" fill="#05a8c0"/><rect x="608.100" y="344" width="11.900" height="11.800" fill="#1590a0"/>
</g>
<path d="M625 292l2.500-3 2.500 3z" fill="#333"/>
<rect x="622.500" y="297.500" width="9" height="18" rx="1" fill="url(#btn)" stroke="#bbb"/><path d="M625 304h4M625 306h4M625 308h4" stroke="#888" stroke-width=".7"/>
<path d="M625 349l2.500 3 2.500-3z" fill="#333"/>
<rect x="561.500" y="361" width="50" height="14" rx="1.500" fill="url(#btn)" stroke="#888"/>
<text x="586.500" y="371.500" text-anchor="middle" style="font-size:8.200px">其它(O)</text>

<text x="355" y="398">预设(R):</text>
<rect x="398" y="388" width="95" height="15" fill="#fff" stroke="#eaeaea"/><path d="M485 394.500h6l-3 3z" fill="#222"/>
<rect x="499.500" y="389.500" width="12" height="12" rx="1.500" fill="#cfd8e4" stroke="#889"/><path d="M502 395.500h7M505.500 392v7" stroke="#2a4a74" stroke-width="2"/>
<rect x="514.500" y="389.500" width="12" height="12" rx="1.500" fill="#dde2e8" stroke="#889"/><path d="M517 395.500h7" stroke="#2a4a74" stroke-width="2"/>
<rect x="548.500" y="387.500" width="97" height="14" rx="1" fill="#efefef" stroke="#c4c4c4"/>
<text x="597" y="398" text-anchor="middle" style="fill:#aaa;font-size:7.700px">PostScript 选项(P)...</text>

<rect x="484.500" y="411" width="49" height="15" rx="1.500" fill="#dfe9f1" stroke="#3c93be"/>
<text x="508.500" y="421.500" text-anchor="middle" style="font-size:8.200px">确定</text>
<rect x="480.500" y="410" width="57" height="20" fill="none" stroke="#dc2a2a" stroke-width="1.600"/>
<rect x="540.500" y="411" width="50" height="14" rx="1.500" fill="url(#btn)" stroke="#888"/>
<text x="565" y="421.500" text-anchor="middle" style="font-size:8.200px">取消</text>
<rect x="596.500" y="411" width="50" height="14" rx="1.500" fill="url(#btn)" stroke="#888"/>
<text x="621.500" y="421.500" text-anchor="middle" style="font-size:8.200px">帮助(H)</text>

<!-- numbered badges -->
<g fill="#e73a32">
<circle cx="446" cy="177" r="7"/><circle cx="493" cy="278" r="7"/><circle cx="492" cy="327" r="7"/><circle cx="469" cy="418" r="7"/>
</g>
<g text-anchor="middle">
<text x="446" y="180.500" style="fill:#fff;font-size:9.500px;font-weight:bold">1</text>
<text x="493" y="281.500" style="fill:#fff;font-size:9.500px;font-weight:bold">2</text>
<text x="492" y="330.500" style="fill:#fff;font-size:9.500px;font-weight:bold">3</text>
<text x="469" y="421.500" style="fill:#fff;font-size:9.500px;font-weight:bold">4</text>
</g>
</svg>
</body></html>
